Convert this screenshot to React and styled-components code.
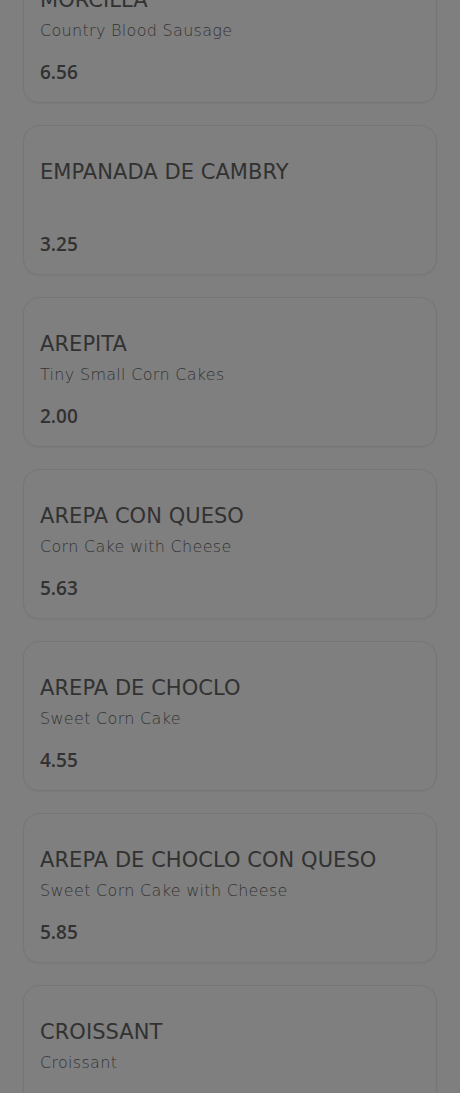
import styled, { createGlobalStyle } from "styled-components";

const GlobalStyle = createGlobalStyle`
  * {
    box-sizing: border-box;
  }

  body {
    margin: 0;
    background: #ffffff;
    font-family: "DejaVu Sans", "Noto Sans", sans-serif;
  }
`;

const menuItems = [
   { name: "MORCILLA", description: "Country Blood Sausage", price: "6.56" },
   { name: "EMPANADA DE CAMBRY", description: "", price: "3.25" },
   { name: "AREPITA", description: "Tiny Small Corn Cakes", price: "2.00" },
   { name: "AREPA CON QUESO", description: "Corn Cake with Cheese", price: "5.63" },
   { name: "AREPA DE CHOCLO", description: "Sweet Corn Cake", price: "4.55" },
   {
      name: "AREPA DE CHOCLO CON QUESO",
      description: "Sweet Corn Cake with Cheese",
      price: "5.85",
   },
   { name: "CROISSANT", description: "Croissant", price: "2.95" },
];

export default function App() {
   return (
      <>
         <GlobalStyle />
         <Page>
            <List>
               {menuItems.map((item) => (
                  <Card key={item.name}>
                     <Title>{item.name}</Title>
                     <Description>{item.description}</Description>
                     <Price>{item.price}</Price>
                  </Card>
               ))}
            </List>
         </Page>
         <Backdrop />
      </>
   );
}

const Page = styled.main`
   overflow: hidden;
   height: 1093px;
`;

/* the list is scrolled down a little in the shot */
const List = styled.div`
   display: flex;
   flex-direction: column;
   gap: 22px;
   padding: 0 23px;
   margin-top: -47px;
`;

const Card = styled.article`
   height: 150px;
   padding: 32px 16px 0;
   display: flex;
   flex-direction: column;
   background: #ffffff;
   border: 1px solid #ececec;
   border-radius: 16px;
   box-shadow: 0 1px 3px rgba(0, 0, 0, 0.05);
`;

const Title = styled.h3`
   margin: 0;
   font-size: 21px;
   line-height: 28px;
   font-weight: 500;
   letter-spacing: 0.05px;
   color: #646464;
`;

const Description = styled.p`
   margin: 6px 0 0;
   min-height: 22px;
   font-size: 16px;
   line-height: 22px;
   font-weight: 300;
   letter-spacing: 0.3px;
   color: #6a6a6a;
`;

const Price = styled.span`
   margin-top: 18px;
   font-family: "Open Sans", "DejaVu Sans", sans-serif;
   font-size: 19px;
   line-height: 24px;
   font-weight: 600;
   color: #646464;
`;

const Backdrop = styled.div`
   position: fixed;
   inset: 0;
   background: rgba(0, 0, 0, 0.5);
`;
